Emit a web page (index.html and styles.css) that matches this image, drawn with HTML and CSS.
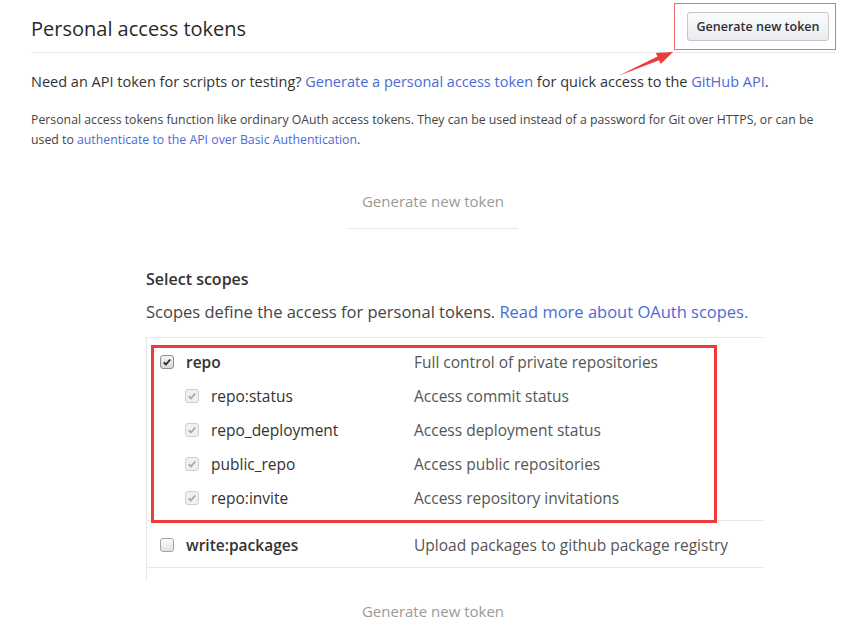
FILE: index.html
```html
<!DOCTYPE html>
<html>
<head>
<meta charset="utf-8">
<link rel="stylesheet" href="styles.css">
</head>
<body>
<div class="page">
  <div class="header">
    <h1 class="title">Personal access tokens</h1>
    <button class="btn">Generate new token</button>
  </div>
  <div class="note-box"></div>
  <svg class="arrow" width="70" height="35" viewBox="0 0 70 35">
    <polygon points="8,31 49.1,15.2 50.7,18.9 63,7 45.9,7.9 47.5,11.6" fill="#f03a3a"/>
  </svg>
  <p class="intro">Need an API token for scripts or testing? <a class="link">Generate a personal access token</a> for quick access to the <a class="link">GitHub API</a>.</p>
  <p class="small">Personal access tokens function like ordinary OAuth access tokens. They can be used instead of a password for Git over HTTPS, or can be used to <a class="link">authenticate to the API over Basic Authentication</a>.</p>
  <div class="gen-top"><span>Generate new token</span></div>
  <div class="scopes">
    <h3 class="scopes-title">Select scopes</h3>
    <p class="scopes-desc">Scopes define the access for personal tokens. <a class="link">Read more about OAuth scopes.</a></p>
    <div class="table">
      <div class="group">
        <div class="row">
          <div class="cell-name"><span class="cb checked"><svg viewBox="0 0 13 13"><path d="M3 6.8 L5.4 9.2 L10 3.8" fill="none" stroke="#2b2b2b" stroke-width="2"/></svg></span><span class="name strong">repo</span></div>
          <div class="cell-desc">Full control of private repositories</div>
        </div>
        <div class="row sub">
          <div class="cell-name"><span class="cb disabled"><svg viewBox="0 0 13 13"><path d="M3 6.8 L5.4 9.2 L10 3.8" fill="none" stroke="#a8a8a8" stroke-width="2"/></svg></span><span class="name">repo:status</span></div>
          <div class="cell-desc">Access commit status</div>
        </div>
        <div class="row sub">
          <div class="cell-name"><span class="cb disabled"><svg viewBox="0 0 13 13"><path d="M3 6.8 L5.4 9.2 L10 3.8" fill="none" stroke="#a8a8a8" stroke-width="2"/></svg></span><span class="name">repo_deployment</span></div>
          <div class="cell-desc">Access deployment status</div>
        </div>
        <div class="row sub">
          <div class="cell-name"><span class="cb disabled"><svg viewBox="0 0 13 13"><path d="M3 6.8 L5.4 9.2 L10 3.8" fill="none" stroke="#a8a8a8" stroke-width="2"/></svg></span><span class="name">public_repo</span></div>
          <div class="cell-desc">Access public repositories</div>
        </div>
        <div class="row sub">
          <div class="cell-name"><span class="cb disabled"><svg viewBox="0 0 13 13"><path d="M3 6.8 L5.4 9.2 L10 3.8" fill="none" stroke="#a8a8a8" stroke-width="2"/></svg></span><span class="name">repo:invite</span></div>
          <div class="cell-desc">Access repository invitations</div>
        </div>
        <div class="red-box"></div>
      </div>
      <div class="group">
        <div class="row">
          <div class="cell-name"><span class="cb"></span><span class="name strong">write:packages</span></div>
          <div class="cell-desc">Upload packages to github package registry</div>
        </div>
      </div>
      <div class="tail"></div>
    </div>
  </div>
  <div class="gen-bottom">Generate new token</div>
</div>
</body>
</html>
```
FILE: styles.css
```css
html, body {
  margin: 0;
  background: #fff;
}
body {
  font-family: "Open Sans", "Noto Sans", sans-serif;
  color: #333;
  width: 865px;
  height: 623px;
  overflow: hidden;
}
.page {
  position: relative;
  padding: 0 30px 0 31px;
}
.header {
  display: flex;
  justify-content: space-between;
  align-items: flex-start;
  height: 52px;
  border-bottom: 1px solid #e6e6e6;
}
.title {
  margin: 16px 0 0;
  font-size: 20px;
  line-height: 26px;
  font-weight: 400;
  color: #2a2a2a;
}
.btn {
  margin: 12px 6px 0 0;
  width: 142px;
  height: 29px;
  padding: 0;
  font-family: inherit;
  font-size: 12.5px;
  font-weight: 600;
  color: #2b2f33;
  border: 1px solid #c4c6c8;
  border-radius: 3px;
  background: linear-gradient(#fafbfc, #e9ecef);
}
.note-box {
  position: absolute;
  left: 674px;
  top: 3px;
  width: 160px;
  height: 45px;
  border: 1.5px solid #f26b6b;
}
.arrow {
  position: absolute;
  left: 610px;
  top: 45px;
}
.link {
  color: #4a6bd6;
  text-decoration: none;
}
.intro {
  margin: 19px 0 0;
  font-size: 14.5px;
  line-height: 20px;
}
.small {
  margin: 18px 0 0;
  font-size: 12.3px;
  line-height: 20px;
  color: #444;
  width: 790px;
}
.gen-top {
  margin-top: 41px;
  display: flex;
  justify-content: center;
}
.gen-top span {
  display: block;
  width: 170px;
  text-align: center;
  font-size: 15px;
  line-height: 20px;
  color: #9a9a9a;
  padding-bottom: 17px;
  border-bottom: 1px solid #e8e8e8;
}
.scopes {
  margin: 40px 0 0 115px;
  width: 618px;
}
.scopes-title {
  margin: 0;
  font-size: 16px;
  line-height: 20px;
  font-weight: 600;
  color: #333;
}
.scopes-desc {
  margin: 12px 0 0;
  font-size: 16.5px;
  line-height: 22px;
  color: #444;
}
.table {
  margin-top: 14px;
  border-top: 1px solid #e8e8e8;
  border-left: 1px solid #e8e8e8;
}
.group {
  position: relative;
  padding: 7px 0 5px;
  border-bottom: 1px solid #e8e8e8;
}
.row {
  display: flex;
  align-items: center;
  height: 34px;
}
.cell-name {
  display: flex;
  align-items: center;
  width: 267px;
  padding-left: 13px;
  box-sizing: border-box;
}
.row.sub .cell-name {
  padding-left: 38px;
}
.cb {
  width: 14px;
  height: 14px;
  box-sizing: border-box;
  border: 1px solid #a2a2a2;
  border-radius: 3px;
  background: linear-gradient(#fbfbfb, #e2e2e2);
  margin-right: 12px;
  display: flex;
  align-items: center;
  justify-content: center;
}
.cb svg {
  width: 12px;
  height: 12px;
}
.cb.checked {
  border-color: #8e8e8e;
  background: linear-gradient(#f4f4f4, #d9d9d9);
}
.cb.disabled {
  border-color: #d0d0d0;
  background: #f0f0f0;
}
.name {
  font-size: 15.5px;
  color: #333;
}
.name.strong {
  font-weight: 600;
}
.cell-desc {
  font-size: 15.5px;
  color: #555;
}
.red-box {
  position: absolute;
  left: 4px;
  top: 7px;
  width: 560px;
  height: 172px;
  border: 3px solid #f03a3a;
}
.tail {
  height: 13px;
}
.gen-bottom {
  margin-top: 20px;
  text-align: center;
  font-size: 15px;
  line-height: 20px;
  color: #9a9a9a;
}
```
